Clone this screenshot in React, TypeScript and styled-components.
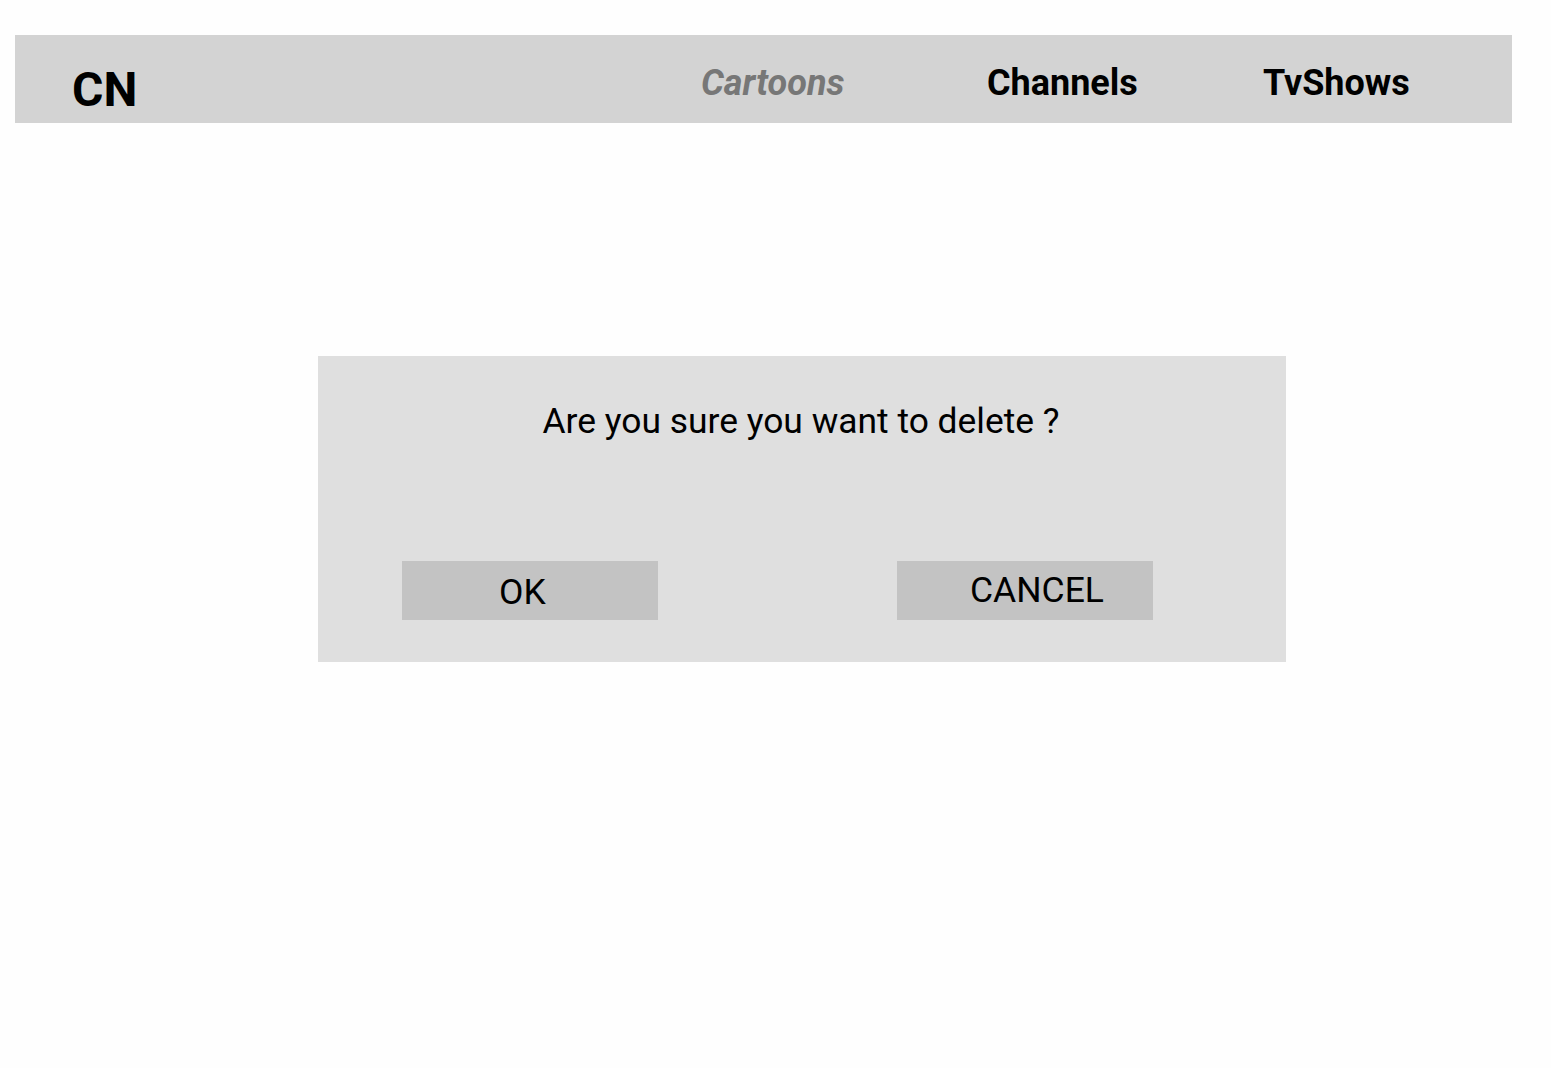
import React from "react";
import styled, { createGlobalStyle } from "styled-components";

const Global = createGlobalStyle`
  html, body { margin: 0; padding: 0; background: #fefefe; }
  body { font-family: Roboto, "Liberation Sans", sans-serif; color: #000; }
`;

const Page = styled.div`
  padding: 35px 39px 0 15px;
  min-height: 1068px;
  box-sizing: border-box;
`;

const Header = styled.header`
  height: 88px;
  background: #d3d3d3;
  display: flex;
  align-items: flex-start;
  padding-left: 57px;
  box-sizing: border-box;
`;

const Logo = styled.div`
  font-size: 48px;
  font-weight: 700;
  line-height: 1;
  margin-top: 31px;
  width: 629px;
`;

const Nav = styled.nav`
  display: flex;
  margin-top: 30px;
`;

const NavItem = styled.a<{ $width?: number; $active?: boolean }>`
  display: block;
  width: ${(p) => (p.$width ? `${p.$width}px` : "auto")};
  font-size: 36px;
  font-weight: 700;
  line-height: 1;
  font-style: ${(p) => (p.$active ? "italic" : "normal")};
  color: ${(p) => (p.$active ? "#777777" : "#000")};
  text-decoration: none;
`;

const Main = styled.main`
  padding: 233px 0 0 303px;
`;

const Dialog = styled.div`
  width: 968px;
  height: 306px;
  background: #dfdfdf;
  display: flex;
  flex-direction: column;
  box-sizing: border-box;
  padding-top: 44px;
`;

const Message = styled.p`
  margin: 0;
  text-align: center;
  font-size: 35.4px;
  height: 43px;
  line-height: 43px;
  padding-right: 2px;
`;

const Actions = styled.div`
  display: flex;
  gap: 239px;
  padding-left: 84px;
  margin-top: 118px;
`;

const Button = styled.button<{ $pad: number; $drop?: number }>`
  width: 256px;
  height: 59px;
  border: none;
  background: #c3c3c3;
  font-family: Roboto, "Liberation Sans", sans-serif;
  font-size: 35.5px;
  font-weight: 400;
  color: #000;
  text-align: left;
  padding: ${(p) => (p.$drop ?? 0) * 2}px 0 0 ${(p) => p.$pad}px;
  line-height: 1;
  cursor: pointer;
`;

export default function App() {
  return (
    <>
      <Global />
      <Page>
        <Header>
          <Logo>CN</Logo>
          <Nav>
            <NavItem href="#" $width={286} $active>
              Cartoons
            </NavItem>
            <NavItem href="#" $width={276}>
              Channels
            </NavItem>
            <NavItem href="#">TvShows</NavItem>
          </Nav>
        </Header>
        <Main>
          <Dialog>
            <Message>Are you sure you want to delete ?</Message>
            <Actions>
              <Button $pad={97} $drop={2}>
                OK
              </Button>
              <Button $pad={73}>CANCEL</Button>
            </Actions>
          </Dialog>
        </Main>
      </Page>
    </>
  );
}
